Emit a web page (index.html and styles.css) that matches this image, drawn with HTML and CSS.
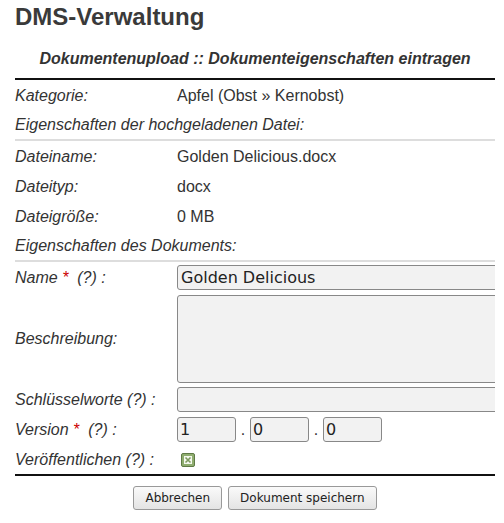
FILE: index.html
```html
<!DOCTYPE html>
<html lang="de">
<head>
<meta charset="utf-8">
<title>DMS-Verwaltung</title>
<link rel="stylesheet" href="styles.css">
</head>
<body>
<div class="page">
  <h1 class="title">DMS-Verwaltung</h1>
  <h2 class="subtitle">Dokumentenupload :: Dokumenteigenschaften eintragen</h2>
  <div class="form">
    <div class="row"><div class="label">Kategorie:</div><div class="value">Apfel (Obst » Kernobst)</div></div>
    <div class="row section"><div class="label">Eigenschaften der hochgeladenen Datei:</div></div>
    <div class="row"><div class="label">Dateiname:</div><div class="value">Golden Delicious.docx</div></div>
    <div class="row"><div class="label">Dateityp:</div><div class="value">docx</div></div>
    <div class="row"><div class="label">Dateigröße:</div><div class="value">0 MB</div></div>
    <div class="row section"><div class="label">Eigenschaften des Dokuments:</div></div>
    <div class="row"><div class="label">Name <span class="req">*</span> &nbsp;(?) :</div><div class="value"><input class="text" type="text" value="Golden Delicious"></div></div>
    <div class="row tall"><div class="label">Beschreibung:</div><div class="value"><textarea class="area"></textarea></div></div>
    <div class="row"><div class="label">Schlüsselworte (?) :</div><div class="value"><input class="text" type="text" value=""></div></div>
    <div class="row"><div class="label">Version <span class="req">*</span> &nbsp;(?) :</div><div class="value version"><input class="ver" type="text" value="1"><span class="dot">.</span><input class="ver" type="text" value="0"><span class="dot">.</span><input class="ver" type="text" value="0"></div></div>
    <div class="row"><div class="label">Veröffentlichen (?) :</div><div class="value"><span class="check"><svg width="8" height="8" viewBox="0 0 8 8"><rect x="0" y="0" width="8" height="8" fill="#f4f8ee"/><path d="M1.5 1.5 L6.5 6.5 M6.5 1.5 L1.5 6.5" stroke="#7d9a5e" stroke-width="1.6"/></svg></span></div></div>
  </div>
  <div class="buttons">
    <button class="btn" type="button">Abbrechen</button>
    <button class="btn" type="button">Dokument speichern</button>
  </div>
</div>
</body>
</html>
```
FILE: styles.css
```css
html, body { margin: 0; padding: 0; background: #fff; }
body { font-family: "Liberation Sans", Arial, sans-serif; color: #333; }
.page { padding: 0 9px 0 15px; }
.title { margin: 0; padding-top: 3px; font-size: 24px; font-weight: bold; color: #3a3a3a; line-height: 28px; height: 30px; }
.subtitle { margin: 0; padding-top: 16px; font-size: 16px; font-weight: bold; font-style: italic; text-align: center; color: #333; line-height: 20px; height: 20px; padding-bottom: 9px; border-bottom: 2px solid #111; }
.form { display: flex; flex-direction: column; overflow: hidden; }
.row { display: grid; grid-template-columns: 162px 1fr; align-items: center; height: 30px; font-size: 16px; flex: none; padding-top: 1px; box-sizing: border-box; }
.row.section { border-bottom: 2px solid #ddd; height: 31px; }
.row.tall { height: 92px; }
.label { font-style: italic; white-space: nowrap; }
.value { white-space: nowrap; min-width: 0; }
.req { color: #c00; }
.text { box-sizing: border-box; width: 340px; height: 25px; border: 1px solid #888; border-radius: 3px; background: #f2f2f2; font-family: "DejaVu Sans", sans-serif; font-size: 16px; color: #222; padding: 0 3px; margin: 0; display: block; }
.area { box-sizing: border-box; width: 340px; height: 88px; border: 1px solid #888; border-radius: 3px; background: #f2f2f2; resize: none; display: block; margin: 0; }
.version { display: flex; align-items: center; }
.ver { box-sizing: border-box; width: 59px; height: 25px; border: 1px solid #888; border-radius: 3px; background: #f2f2f2; font-family: "DejaVu Sans", sans-serif; font-size: 16px; color: #222; padding: 0 2px; margin: 0; }
.dot { width: 14px; text-align: center; font-size: 16px; line-height: 25px; }
.check { display: inline-flex; align-items: center; justify-content: center; width: 12px; height: 12px; margin-left: 4px; background: #8fad6f; border: 1px solid #5f7a46; border-radius: 2px; vertical-align: middle; }
.buttons { border-top: 2px solid #111; display: flex; justify-content: center; gap: 6px; padding-top: 10px; }
.btn { font-family: "DejaVu Sans", sans-serif; font-size: 12px; color: #222; height: 24px; padding: 0 11px; border: 1px solid #999; border-radius: 3px; background: linear-gradient(#fafafa, #e4e4e4); margin: 0; }
```
